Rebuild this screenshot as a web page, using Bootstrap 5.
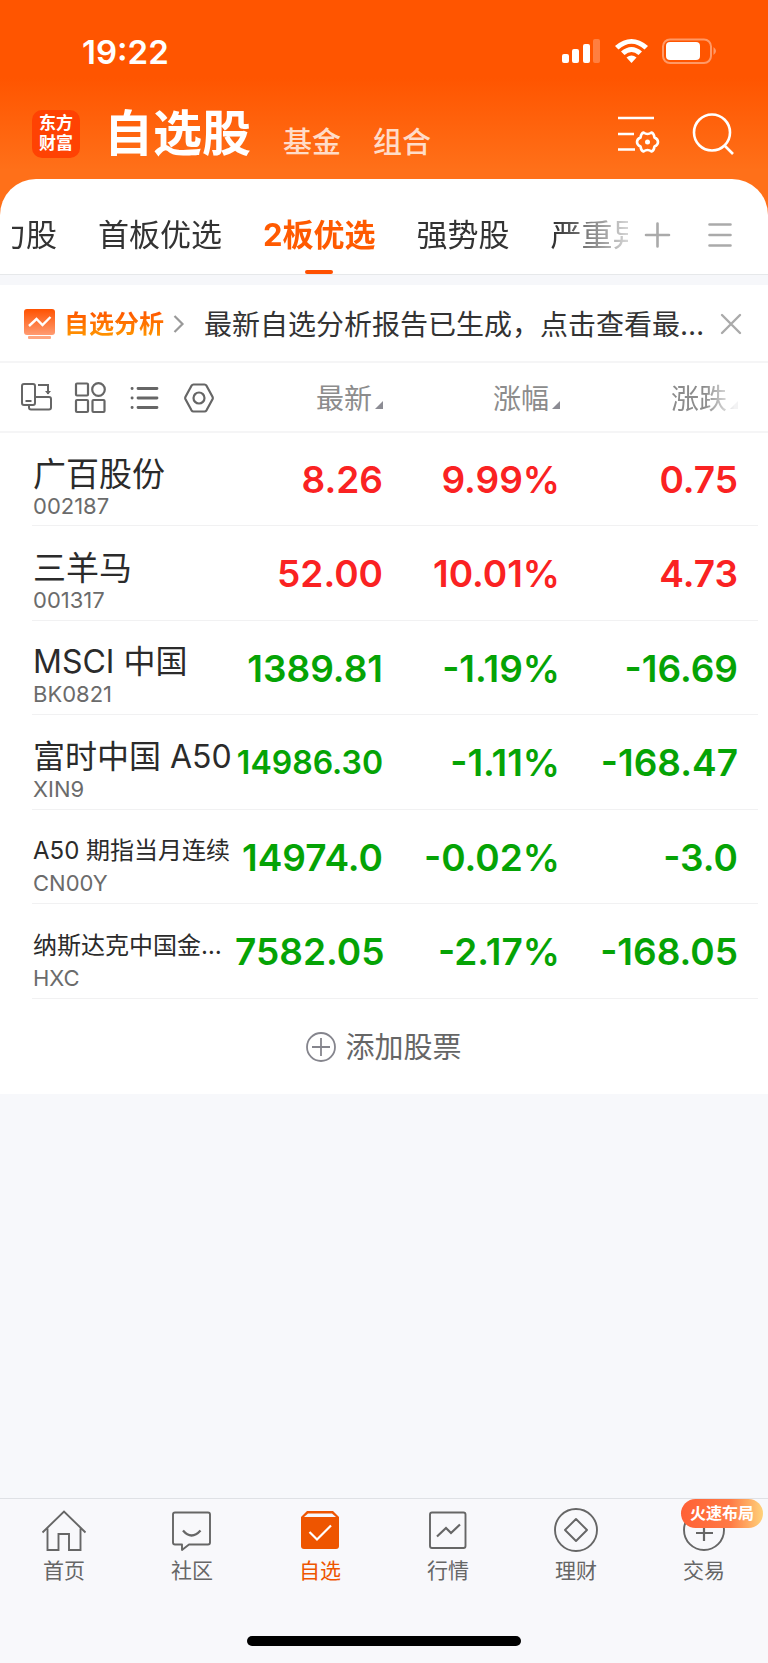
<!DOCTYPE html>
<html lang="zh-CN">
<head>
<meta charset="utf-8">
<meta name="viewport" content="width=device-width, initial-scale=1">
<title>自选股</title>
<link href="https://cdn.jsdelivr.net/npm/bootstrap@5.3.0/dist/css/bootstrap.min.css" rel="stylesheet">
<style>
  body { font-family: Inter, "Noto Sans CJK SC", sans-serif; background: #f7f8fb; color: #333; line-height: 1; }
  svg { display: block; flex: none; }
  a { color: inherit; text-decoration: none; }
  button { color: inherit; }
  .btn-plain { border: 0; background: none; padding: 0; display: block; }

  .app-head { background: linear-gradient(#ff5500 0, #ff5500 78px, #ff7019 170px); color: #fff; padding-bottom: 36px; }
  .status-row { height: 102px; padding: 2px 50px 0 82px; }
  .clock { font-size: 33px; font-weight: 600; }
  .title-row { height: 77px; padding: 0 32px 14px; }
  .brand-tile { width: 48px; height: 48px; border-radius: 10px; background: #ff4203; font-size: 17px; line-height: 20px; font-weight: 700; text-align: center; padding-top: 3px; }
  .page-title { font-size: 49px; line-height: 60px; font-weight: 700; }
  .page-link-alt { font-size: 29px; line-height: 42px; font-weight: 500; color: #ffdcc8; }

  .sheet { background: #fff; margin-top: -36px; border-radius: 36px 36px 0 0; }
  .tabs-row { height: 96px; padding: 0 36px 0 12px; border-bottom: 1px solid #e6e8ea; }
  .tab-strip { gap: 41px; overflow: hidden; height: 95px; font-size: 31px; white-space: nowrap; width: 616px;
    -webkit-mask-image: linear-gradient(90deg, #000 88%, transparent 103%); mask-image: linear-gradient(90deg, #000 88%, transparent 103%); }
  .tab-strip a { padding-top: 10px; height: 95px; line-height: 92px; flex: none; }
  .tab-strip a:first-child { margin-left: -17px; }
  .tab-strip .current { color: #ff5a00; font-weight: 700; position: relative; }
  .tab-strip .current::after { content: ""; position: absolute; left: 50%; bottom: 0; width: 28px; height: 4px; margin-left: -14px; border-radius: 2px; background: #ff5000; }
  .band { height: 10px; background: #f6f7fa; }

  .notice { height: 78px; padding: 2px 26px 0 24px; border-bottom: 2px solid #f5f5f6; }
  .notice-tag { font-size: 25px; line-height: 32px; font-weight: 700; color: transparent; background: linear-gradient(#ff5500 10%, #ff9a00 95%); -webkit-background-clip: text; background-clip: text; }
  .notice-msg { font-size: 28px; line-height: 36px; white-space: nowrap; padding-top: 2px; }

  .quotes { width: 100%; table-layout: fixed; margin: 0; }
  .quotes th, .quotes td { padding: 0; text-align: right; vertical-align: middle; white-space: nowrap; }
  .quotes thead tr { height: 69px; border-bottom: 2px solid #f5f5f6; }
  .quotes thead th { font-weight: 400; }
  .quotes .c-price { width: 148px; }
  .quotes .c-pct { width: 177px; }
  .quotes .c-chg { width: 208px; padding-right: 30px; }
  .sort-btn { font-size: 28px; line-height: 36px; color: #8c8c8c; margin: 4px 0 0 auto; }
  .sort-btn::after { content: ""; display: inline-block; width: 8px; height: 8px; margin-left: 3px; background: #8c8c94; clip-path: polygon(100% 0, 100% 100%, 0 100%); }
  .fade-end { -webkit-mask-image: linear-gradient(90deg, #000 50%, rgba(0,0,0,.1) 95%); mask-image: linear-gradient(90deg, #000 50%, rgba(0,0,0,.1) 95%); }
  .tools { gap: 22px; padding: 2px 0 0 20px; color: #666; }
  .quotes tbody tr { height: 94px; position: relative; }
  .quotes tbody tr:nth-child(even) { height: 95px; }
  .quotes tbody th::after { content: ""; position: absolute; left: 32px; right: 10px; bottom: 0; height: 1px; background: #f1f1f2; }
  .quotes tbody th { text-align: left; padding: 12px 0 0 33px; font-weight: 400; }
  .quotes tbody td { font-size: 37px; font-weight: 600; }
  .quotes tbody td.tight { font-size: 32px; }
  .up td { color: #fa2222; }
  .down td { color: #05a305; }
  .s-name { display: block; font-size: 33px; line-height: 40px; color: #2b2b2b; }
  .s-name.mixed { font-size: 32px; }
  .s-name.long { font-size: 24px; }
  .s-code { display: block; font-size: 22px; line-height: 24px; color: #6b6b6b; }

  .add-row { height: 95px; font-size: 29px; color: #666; gap: 9px; width: 100%; padding-top: 1px; }

  .app-foot { background: #f8f8fb; border-top: 1px solid #dfe1e5; height: 165px; color: #666; }
  .foot-item { height: 94px; padding-top: 9px; font-size: 21px; line-height: 28px; }
  .foot-item svg { margin-bottom: 5px; }
  .foot-item.current { color: #ee5500; }
  .hot-tag { position: absolute; top: 0; right: 5px; width: 82px; height: 29px; border-radius: 15px; font-size: 16px; line-height: 29px; font-weight: 700; color: #fff; text-align: center; background: linear-gradient(90deg, #ff6035, #ff7a45 60%, #ffd27a); }
  .home-bar { width: 274px; height: 10px; border-radius: 5px; background: #000; margin-top: 43px; }
</style>
</head>
<body class="d-flex flex-column min-vh-100">
<header class="app-head">
  <div class="status-row d-flex align-items-center justify-content-between">
    <span class="clock">19:22</span>
    <svg width="156" height="28" viewBox="0 0 156 28" fill="#fff" aria-hidden="true">
      <rect x="0" y="16" width="7" height="9" rx="2"/><rect x="10" y="11" width="7" height="14" rx="2"/><rect x="21" y="6" width="7" height="19" rx="2"/><rect x="31" y="1" width="7" height="24" rx="2" opacity=".25"/>
      <path d="M53 8Q69.500-6 86 8L82.500 11.500Q69.500 0 56.500 11.500Z"/>
      <path d="M59 13.500Q69.500 4.500 80 13.500L76.500 17Q69.500 11 62.500 17Z"/>
      <path d="M64.500 19.500Q69.500 15.500 74.500 19.500L69.500 25Z"/>
      <rect x="101" y="1.500" width="48" height="23.500" rx="7" fill="none" stroke="#fff" stroke-width="2" opacity=".4"/>
      <rect x="104" y="4" width="34" height="18" rx="4"/><path d="M151.500 9q5 4 0 8z" opacity=".4"/>
    </svg>
  </div>
  <div class="title-row d-flex align-items-center">
    <div class="brand-tile">东方<br>财富</div>
    <nav class="d-flex align-items-end ms-4 me-auto">
      <h1 class="page-title m-0">自选股</h1>
      <a href="#" class="page-link-alt ms-4 ps-2">基金</a>
      <a href="#" class="page-link-alt ms-4 ps-2">组合</a>
    </nav>
    <div class="d-flex align-items-center gap-4">
      <button class="btn-plain" aria-label="设置"><svg width="50" height="44" viewBox="0 0 50 44" fill="none" stroke="#fff" stroke-width="2.600"><path d="M0 6h36M0 22h16M0 37.500h17"/><g transform="translate(29.500 30)"><path stroke-linejoin="round" d="M-4-9.500Q0-6.500 4-9.500Q6.500-8.500 7-4.500Q10.500-3 10.500 0Q10.500 3 7 4.500Q6.500 8.500 4 9.500Q0 6.500-4 9.500Q-6.500 8.500-7 4.500Q-10.500 3-10.500 0Q-10.500-3-7-4.500Q-6.500-8.500-4-9.500Z"/><circle r="2.500" fill="#fff" stroke="none"/></g></svg></button>
      <button class="btn-plain" aria-label="搜索"><svg width="44" height="44" viewBox="0 0 44 44" fill="none" stroke="#fff" stroke-width="2.600"><circle cx="20" cy="20.500" r="18"/><path d="M32.500 33.500 41 42"/></svg></button>
    </div>
  </div>
</header>

<main class="flex-grow-1">
  <div class="sheet">
    <div class="tabs-row d-flex align-items-center">
      <nav class="tab-strip d-flex">
        <a href="#">力股</a><a href="#">首板优选</a><a href="#" class="current">2板优选</a><a href="#">强势股</a><a href="#">严重异动</a>
      </nav>
      <div class="d-flex ms-auto gap-4 pt-3">
        <button class="btn-plain me-2" aria-label="添加分组"><svg width="32" height="26" viewBox="0 0 32 26" stroke="#aaa" stroke-width="2.600" stroke-linecap="round"><path d="M2 13h23M13.500 1.500v23"/></svg></button>
        <button class="btn-plain" aria-label="分组列表"><svg width="24" height="26" viewBox="0 0 24 26" stroke="#aaa" stroke-width="2.600" stroke-linecap="round"><path d="M1.500 2.500h21M1.500 13h21M1.500 23.500h21"/></svg></button>
      </div>
    </div>
    <div class="band"></div>

    <div class="notice d-flex align-items-center">
      <svg width="32" height="32" viewBox="0 0 32 32"><defs><linearGradient id="ng" x2="0" y2="1"><stop stop-color="#ff5200"/><stop offset="1" stop-color="#ff9b72"/></linearGradient></defs><rect y="1" width="31" height="26" rx="3" fill="url(#ng)"/><path d="M5 18 12.500 11l6 6L26.500 9" fill="none" stroke="#fff" stroke-width="2.400"/><rect x="4" y="28" width="23" height="3" rx="1" fill="#ffa680"/></svg>
      <a href="#" class="d-flex align-items-center ms-2"><span class="notice-tag">自选分析</span>
        <svg class="ms-2" width="16" height="20" viewBox="0 0 16 20" fill="none" stroke="#999" stroke-width="2.200"><path d="M2.500 2 10.500 10l-8 8"/></svg></a>
      <a href="#" class="notice-msg flex-grow-1 ms-3">最新自选分析报告已生成，点击查看最…</a>
      <button class="btn-plain" aria-label="关闭"><svg width="22" height="22" viewBox="0 0 22 22" stroke="#aaa" stroke-width="2.400" stroke-linecap="round"><path d="M2 2l18 18M20 2 2 20"/></svg></button>
    </div>

    <table class="quotes">
      <thead>
        <tr>
          <th><div class="tools d-flex">
            <button class="btn-plain" aria-label="横屏"><svg width="32" height="32" viewBox="0 0 32 32" fill="none" stroke="currentColor" stroke-width="2"><rect x="2" y="2" width="13" height="21" rx="2"/><path d="M5.500 19h6M18 3h10v9M9 23v2.500q0 2 2 2h18q2 0 2-2V17q0-2-2-2H15"/><path d="M25 9h6l-3 3.500z" fill="currentColor" stroke="none"/></svg></button>
            <button class="btn-plain" aria-label="宫格"><svg width="32" height="32" viewBox="0 0 32 32" fill="none" stroke="currentColor" stroke-width="2.200"><rect x="2" y="1.500" width="12" height="12" rx="1"/><circle cx="24.500" cy="7.500" r="6.300"/><rect x="2" y="18" width="12" height="12" rx="1"/><rect x="18.500" y="18" width="12" height="12" rx="1"/></svg></button>
            <button class="btn-plain" aria-label="列表"><svg width="32" height="32" viewBox="0 0 32 32" fill="none" stroke="currentColor" stroke-width="2.800" stroke-linecap="round"><path d="M10 6.500h19M10 16h19M10 25.500h19M4 6.500h.200M4 16h.200M4 25.500h.200"/></svg></button>
            <button class="btn-plain" aria-label="设置"><svg width="32" height="32" viewBox="0 0 32 32" fill="none" stroke="currentColor" stroke-width="2.200"><path stroke-linejoin="round" d="M11.500 2.500h11q1.200 0 2 1.200l6 11q.600 1.300 0 2.600l-6 11q-.800 1.200-2 1.200h-11q-1.200 0-2-1.200l-6-11q-.600-1.300 0-2.600l6-11q.800-1.200 2-1.200Z"/><circle cx="17" cy="16" r="5.500"/></svg></button>
          </div></th>
          <th class="c-price"><button class="btn-plain sort-btn">最新</button></th>
          <th class="c-pct"><button class="btn-plain sort-btn">涨幅</button></th>
          <th class="c-chg"><button class="btn-plain sort-btn fade-end">涨跌</button></th>
        </tr>
      </thead>
      <tbody>
        <tr class="up"><th><span class="s-name">广百股份</span><span class="s-code">002187</span></th><td>8.26</td><td>9.99%</td><td class="c-chg">0.75</td></tr>
        <tr class="up"><th><span class="s-name">三羊马</span><span class="s-code">001317</span></th><td>52.00</td><td>10.01%</td><td class="c-chg">4.73</td></tr>
        <tr class="down"><th><span class="s-name mixed">MSCI 中国</span><span class="s-code">BK0821</span></th><td>1389.81</td><td>-1.19%</td><td class="c-chg">-16.69</td></tr>
        <tr class="down"><th><span class="s-name mixed">富时中国 A50</span><span class="s-code">XIN9</span></th><td class="tight">14986.30</td><td>-1.11%</td><td class="c-chg">-168.47</td></tr>
        <tr class="down"><th><span class="s-name long">A50 期指当月连续</span><span class="s-code">CN00Y</span></th><td>14974.0</td><td>-0.02%</td><td class="c-chg">-3.0</td></tr>
        <tr class="down"><th><span class="s-name long">纳斯达克中国金…</span><span class="s-code">HXC</span></th><td>7582.05</td><td>-2.17%</td><td class="c-chg">-168.05</td></tr>
      </tbody>
    </table>

    <button class="btn-plain add-row d-flex align-items-center justify-content-center">
      <svg width="30" height="30" viewBox="0 0 30 30" fill="none" stroke="#85858d" stroke-width="1.800"><circle cx="15" cy="15" r="14"/><path d="M6 15h18M15 6v18"/></svg>添加股票
    </button>
  </div>
</main>

<footer class="app-foot">
  <nav class="row row-cols-6 g-0">
    <a href="#" class="col foot-item d-flex flex-column align-items-center">
      <svg width="46" height="44" viewBox="0 0 46 44" fill="none" stroke="currentColor" stroke-width="1.900"><path d="M1.500 24.500 23 3.500l21.500 21M6.500 20.500V42h11V26H28v16h11.500V20.500"/></svg>首页</a>
    <a href="#" class="col foot-item d-flex flex-column align-items-center">
      <svg width="46" height="44" viewBox="0 0 46 44" fill="none" stroke="currentColor" stroke-width="1.900" stroke-linejoin="round"><path d="M6 4.500h33q2 0 2 2v28q0 2-2 2H20L13 42v-5.500H6q-2 0-2-2v-28q0-2 2-2Z"/><path d="M14 22.500q8.500 10 17.500 0" stroke-width="2.300"/></svg>社区</a>
    <a href="#" class="col foot-item current d-flex flex-column align-items-center">
      <svg width="46" height="44" viewBox="0 0 46 44"><path fill="currentColor" d="M10 3h26l6 6v29q0 3-3 3H7q-3 0-3-3V9Z"/><path fill="#f8f8fb" d="M11 5.500h24l4 3.500H7Z"/><path d="m12.500 24 7.500 7.500L34 17.500" fill="none" stroke="#fff" stroke-width="2.200"/></svg>自选</a>
    <a href="#" class="col foot-item d-flex flex-column align-items-center">
      <svg width="46" height="44" viewBox="0 0 46 44" fill="none" stroke="currentColor" stroke-width="1.900"><rect x="5" y="4.500" width="35.500" height="35.500" rx="2"/><path d="m12 28.500 9-8.500 5 5 9-8.500" stroke-width="2.200"/></svg>行情</a>
    <a href="#" class="col foot-item d-flex flex-column align-items-center">
      <svg width="46" height="44" viewBox="0 0 46 44" fill="none" stroke="currentColor" stroke-width="1.900"><circle cx="23" cy="22" r="21"/><path d="M23 11 34 22 23 33 12 22Z" stroke-linejoin="round"/></svg>理财</a>
    <a href="#" class="col foot-item d-flex flex-column align-items-center position-relative">
      <svg width="46" height="44" viewBox="0 0 46 44" fill="none" stroke="currentColor" stroke-width="1.900"><circle cx="23" cy="22" r="20"/><path d="M15 25h17M23 16v17" stroke-width="2.200"/></svg>交易
      <span class="hot-tag">火速布局</span></a>
  </nav>
  <div class="home-bar mx-auto"></div>
</footer>
<script src="https://cdn.jsdelivr.net/npm/bootstrap@5.3.0/dist/js/bootstrap.bundle.min.js"></script>
</body>
</html>
